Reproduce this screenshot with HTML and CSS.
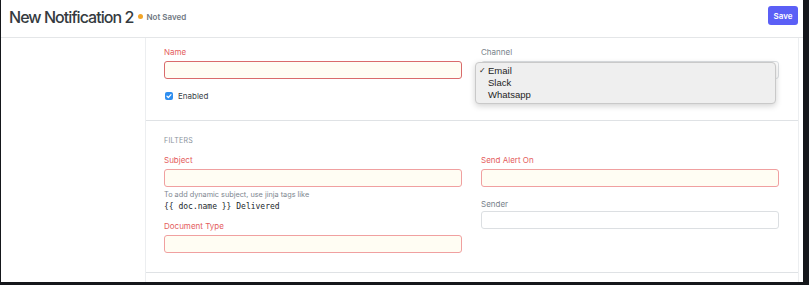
FILE: index.html
```html
<!DOCTYPE html>
<html>
<head>
<meta charset="utf-8">
<link rel="stylesheet" href="styles.css">
</head>
<body>
<div class="window">
  <header class="page-head">
    <div class="title-wrap">
      <h1 class="title">New Notification 2</h1>
      <span class="status"><span class="dot"></span>Not Saved</span>
    </div>
    <button class="btn-primary">Save</button>
  </header>
  <div class="layout">
    <aside class="sidebar"></aside>
    <main class="form">
      <section class="section sec-main">
        <div class="grid">
          <div class="col">
            <div class="field">
              <label class="label req">Name</label>
              <div class="input req-input focus"></div>
            </div>
            <div class="check-row">
              <span class="checkbox">
                <svg viewBox="0 0 8 8" width="8" height="8"><path d="M2 4.2 L3.4 5.5 L6 2.6" fill="none" stroke="#fff" stroke-width="1.2" stroke-linecap="round" stroke-linejoin="round"/></svg>
              </span>
              <span class="check-label">Enabled</span>
            </div>
          </div>
          <div class="col">
            <div class="field channel">
              <label class="label">Channel</label>
              <div class="input plain"></div>
              <div class="dropdown">
                <div class="opt"><span class="tick">✓</span>Email</div>
                <div class="opt"><span class="tick"></span>Slack</div>
                <div class="opt"><span class="tick"></span>Whatsapp</div>
              </div>
            </div>
          </div>
        </div>
      </section>
      <section class="section sec-filters">
        <div class="sec-title">FILTERS</div>
        <div class="grid">
          <div class="col">
            <div class="field">
              <label class="label req">Subject</label>
              <div class="input req-input"></div>
              <div class="help">To add dynamic subject, use jinja tags like</div>
              <div class="mono">{{ doc.name }} Delivered</div>
            </div>
            <div class="field doc-type">
              <label class="label req">Document Type</label>
              <div class="input req-input"></div>
            </div>
          </div>
          <div class="col">
            <div class="field">
              <label class="label req">Send Alert On</label>
              <div class="input req-input"></div>
            </div>
            <div class="field sender">
              <label class="label">Sender</label>
              <div class="input plain"></div>
            </div>
          </div>
        </div>
      </section>
    </main>
  </div>
</div>
</body>
</html>
```
FILE: styles.css
```css
* { box-sizing: border-box; }
html, body { margin: 0; padding: 0; }
body {
  background: #15171b;
  font-family: Inter, "Noto Sans", sans-serif;
  width: 809px;
  height: 285px;
  overflow: hidden;
}
.window {
  margin: 0 6px 0 1px;
  height: 282px;
  background: #fff;
  display: flex;
  flex-direction: column;
}
.page-head {
  height: 38px;
  border-bottom: 1px solid #e4e6e8;
  display: flex;
  justify-content: space-between;
  align-items: flex-start;
  padding: 0 5px 0 8px;
}
.title-wrap {
  display: flex;
  align-items: center;
  height: 33px;
}
.title {
  margin: 0;
  font-size: 16px;
  font-weight: 500;
  color: #343a40;
  letter-spacing: -0.95px;
}
.status {
  display: flex;
  align-items: center;
  margin-left: 5px;
  font-size: 8px;
  font-weight: 600;
  color: #6f7882;
}
.dot {
  width: 5px;
  height: 5px;
  border-radius: 50%;
  background: #f2a527;
  margin-right: 3px;
}
.btn-primary {
  margin-top: 6px;
  width: 30px;
  height: 19px;
  border: none;
  border-radius: 3px;
  background: #5b5ff6;
  color: #fff;
  font-family: Inter, sans-serif;
  font-size: 8px;
  font-weight: 600;
  padding: 0;
}
.layout {
  flex: 1;
  display: flex;
}
.sidebar {
  width: 145px;
  border-right: 1px solid #eceef0;
}
.form {
  flex: 1;
  border-right: 1px solid #eceef0;
  margin-right: 4px;
}
.section {
  border-bottom: 1px solid #dfe2e5;
  padding: 0 19px 0 18px;
}
.sec-main {
  height: 83px;
  padding-top: 8px;
}
.sec-filters {
  height: 152px;
  padding-top: 15px;
}
.sec-title {
  font-size: 7px;
  line-height: 9px;
  color: #8a939c;
  letter-spacing: 0.3px;
  margin-bottom: 9px;
}
.grid {
  display: grid;
  grid-template-columns: 298px 298px;
  column-gap: 19px;
}
.col {
  display: flex;
  flex-direction: column;
}
.field { position: relative; }
.label {
  display: block;
  font-size: 8px;
  line-height: 12px;
  height: 12px;
  margin-bottom: 3px;
  color: #79828b;
}
.label.req { color: #e45d5d; }
.input {
  height: 18px;
  border-radius: 3px;
  border: 1px solid #dcdfe2;
  background: #fff;
}
.input.req-input {
  border-color: #f0a0a0;
  background: #fffdf3;
}
.input.req-input.focus { border-color: #d96b6b; }
.check-row {
  display: flex;
  align-items: center;
  margin-top: 12px;
  height: 10px;
}
.checkbox {
  width: 8px;
  height: 8px;
  border-radius: 2px;
  background: #2e8ef0;
  display: flex;
  margin-left: 1px;
}
.check-label {
  margin-left: 5px;
  font-size: 8px;
  color: #3c434a;
}
.channel .dropdown {
  position: absolute;
  left: -6px;
  top: 16px;
  width: 301px;
  height: 42px;
  background: #efefef;
  border: 1px solid #c9c9c9;
  border-radius: 4px;
  box-shadow: 0 2px 6px rgba(0,0,0,0.18);
  padding-top: 2px;
  font-family: "Liberation Sans", Arial, sans-serif;
  font-size: 9.5px;
  color: #1e1e1e;
}
.opt {
  height: 12px;
  line-height: 12px;
  display: flex;
}
.tick {
  width: 12px;
  padding-left: 3px;
  font-size: 8px;
}
.help {
  margin-top: 3px;
  font-size: 7.3px;
  line-height: 10px;
  color: #7d868f;
}
.mono {
  margin-top: 1px;
  font-family: "DejaVu Sans Mono", "Liberation Mono", monospace;
  font-size: 8px;
  line-height: 12px;
  color: #22272c;
}
.doc-type { margin-top: 7px; }
.sender { margin-top: 11px; }
.sender .label { margin-bottom: 1px; }
```
